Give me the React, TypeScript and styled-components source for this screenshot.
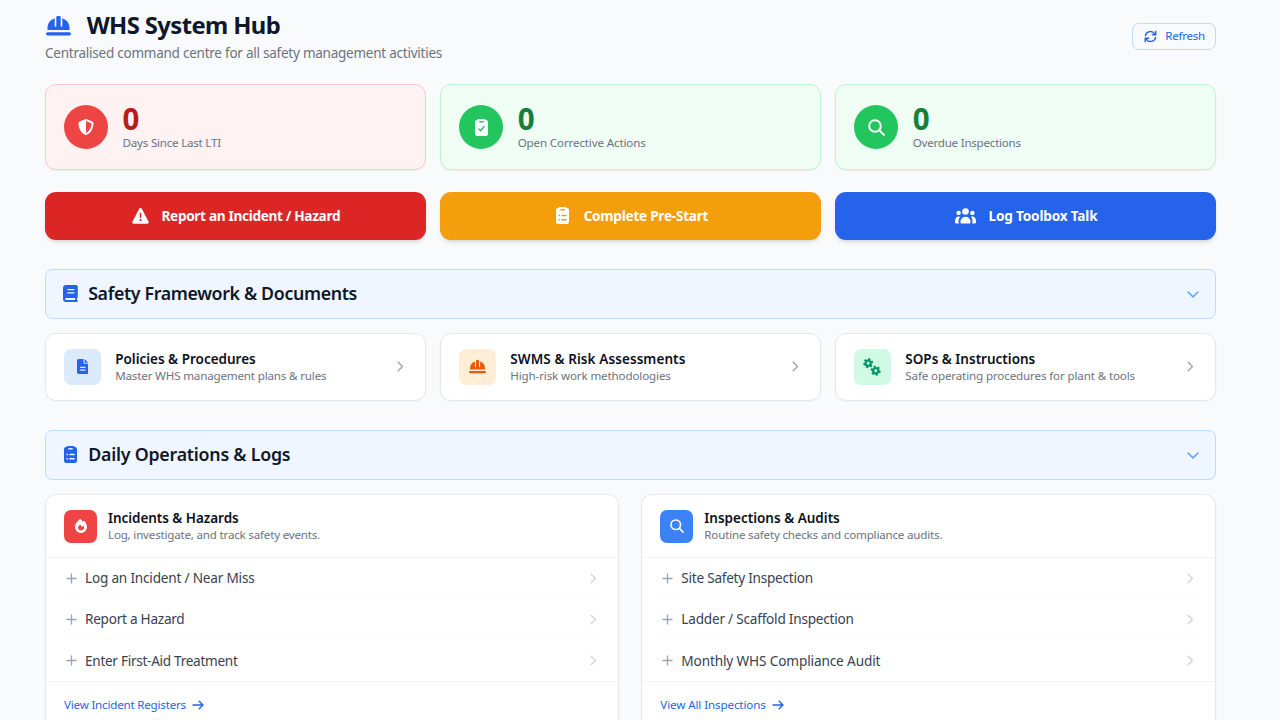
import React from 'react';
import styled, { createGlobalStyle } from 'styled-components';
import { FaShieldHalved } from 'react-icons/fa6';

const Global = createGlobalStyle`
  * { box-sizing: border-box; }
  body { margin: 0; background: #f9fafc; font-family: "Noto Sans", "Open Sans", sans-serif; color: #0f172a; height: 720px; overflow: hidden; }
  svg { display: block; flex: none; }
`;

const Page = styled.main`
  width: 1280px; height: 720px; overflow: hidden; padding: 10px 64.2px 0 45px;
  display: flex; flex-direction: column;
  > * { flex: none; }
`;
const Text = styled.span<{ $ls?: number }>`
  letter-spacing: ${p => p.$ls ?? 0}px; white-space: nowrap; display: block;
`;
const Header = styled.header`
  display: flex; justify-content: space-between; height: 74.2px;
`;
const TitleRow = styled.div`
  display: flex; align-items: center; gap: 15.5px; height: 32px; color: #2563eb; padding-left: 1.2px;
`;
const Title = styled.h1`
  margin: 0; font-size: 23.8px; font-weight: 700; line-height: 32px; letter-spacing: -0.6px; color: #0f172a; padding-bottom: 2px;
`;
const Subtitle = styled(Text)`font-size: 13.5px; line-height: 22px; color: #6b7280;`;
const RefreshButton = styled.button`
  margin: 13px 0 0; width: 84px; height: 27px; border: 1px solid #bfdbfe; border-radius: 7px;
  background: transparent; color: #2563eb; font: 400 11.6px/16px "Noto Sans", sans-serif;
  display: flex; align-items: center; gap: 8px; padding: 0 0 1px 11.5px;
`;
const ThreeCols = styled.div<{ $mb: number }>`
  display: grid; grid-template-columns: repeat(3, 1fr); gap: 14.4px; margin-bottom: ${p => p.$mb}px;
`;
const StatCard = styled.section<{ $bg: string; $border: string }>`
  height: 86px; border: 1px solid ${p => p.$border}; border-radius: 11px; background: ${p => p.$bg};
  display: flex; align-items: center; gap: 14.6px; padding: 0 18px; box-shadow: 0 1px 2px rgba(0,0,0,.06);
`;
const Round = styled.div<{ $bg: string }>`
  width: 44px; height: 44px; border-radius: 50%; background: ${p => p.$bg}; color: #fff;
  display: flex; align-items: center; justify-content: center;
`;
const StatValue = styled.div<{ $color: string }>`
  font-size: 29.5px; font-weight: 700; line-height: 31px; color: ${p => p.$color}; padding-bottom: 1px;
`;
const SmallText = styled(Text)`font-size: 11.6px; line-height: 16px; color: #6b7280;`;
const ActionButton = styled.button<{ $bg: string }>`
  height: 47.5px; border: 0; border-radius: 11px; background: ${p => p.$bg}; color: #fff;
  font: 700 13.6px/20px "Noto Sans", sans-serif; padding: 0 0 0 1px;
  display: flex; align-items: center; justify-content: center; gap: 13px;
  box-shadow: 0 3px 5px -1px rgba(0,0,0,.12), 0 2px 3px -2px rgba(0,0,0,.12);
`;
const ActionIcon = styled.div`min-width: 17px; display: flex; justify-content: center;`;
const Section = styled.div`
  height: 49.6px; border: 1px solid #bfdbfe; border-radius: 7px; background: #eff6ff; color: #2563eb;
  display: flex; align-items: center; padding: 0 16.2px; margin-bottom: 14.6px;
`;
const SectionTitle = styled.h2<{ $ls: number }>`
  margin: 0 auto 0 9px; font-size: 17.8px; font-weight: 600; line-height: 24px; letter-spacing: ${p => p.$ls}px; color: #0f172a; padding-bottom: 2px;
`;
const SectionIcon = styled.div`width: 17px; display: flex; justify-content: center;`;
const LinkCard = styled.a`
  height: 67.6px; background: #fff; border: 1px solid #e5e7eb; border-radius: 11px;
  display: flex; align-items: center; padding: 0 20.6px 0 18px; gap: 14.6px; box-shadow: 0 1px 2px rgba(0,0,0,.03);
`;
const Tile = styled.div<{ $bg: string; $color: string; $size: number }>`
  width: ${p => p.$size}px; height: ${p => p.$size}px; border-radius: 7px; background: ${p => p.$bg}; color: ${p => p.$color};
  display: flex; align-items: center; justify-content: center; flex: none;
`;
const Labels = styled.div`flex: 1; padding-top: 1px;`;
const CardTitle = styled(Text)`font-size: 13.5px; font-weight: 600; line-height: 17px; color: #0b1020;`;
const TwoCols = styled.div`display: grid; grid-template-columns: 1fr 1fr; gap: 21.9px;`;
const Panel = styled.section`
  height: 240px; background: #fff; border: 1px solid #e5e7eb; border-radius: 11px; box-shadow: 0 1px 2px rgba(0,0,0,.04);
`;
const PanelHead = styled.div`
  height: 63px; border-bottom: 1px solid #f1f3f5; display: flex; align-items: center; gap: 11px; padding: 0 18px;
`;
const PanelRows = styled.div`padding: 0 18px; border-bottom: 1px solid #f1f3f5;`;
const PanelRow = styled.div`
  height: 41px; display: flex; align-items: center; color: #9ca3af; padding: 0 3px 0 1.5px;
  &:not(:last-child) { border-bottom: 1px solid #f9fafb; }
`;
const RowText = styled(Text)`font-size: 13.6px; line-height: 20px; color: #374151; margin: 0 auto 0 8.5px;`;
const FooterLink = styled.a`
  display: flex; align-items: center; gap: 6px; height: 45px; padding: 0 18px; color: #2563eb; font-size: 11.6px; line-height: 16px;
`;

const stroke = { fill: 'none', stroke: 'currentColor', strokeLinecap: 'round', strokeLinejoin: 'round' } as const;
const Search = ({ size }: { size: number }) => (
  <svg width={size} height={size} viewBox="0 0 17 17" {...stroke} strokeWidth="2"><circle cx="7" cy="7" r="5.8" /><path d="M11.3 11.3 15.9 15.9" /></svg>
);
const ChevronRight = ({ color }: { color: string }) => (
  <svg width="7" height="11" viewBox="0 0 7 11" {...stroke} stroke={color} strokeWidth="1.4"><path d="M1.2 1.2l4.3 4.3L1.2 9.8" /></svg>
);
const ChevronDown = () => (
  <svg width="12" height="9" viewBox="0 -2 12 9" {...stroke} stroke="#60a5fa" strokeWidth="1.5"><path d="M1 1l5 4.9L11 1" /></svg>
);
const Plus = () => (
  <svg width="11" height="11" viewBox="0 0 11 11" {...stroke} strokeWidth="1.3"><path d="M5.5 1v9M1 5.5h9" /></svg>
);
const ArrowRight = () => (
  <svg width="12" height="10" viewBox="0 0 12 10" {...stroke} strokeWidth="1.4"><path d="M1 5h10M7.2 1.2 11 5 7.2 8.8" /></svg>
);
const RefreshIcon = () => (
  <svg width="13" height="13" viewBox="0 0 13 13" {...stroke} strokeWidth="1.4">
    <path d="M1.4 5.6A5.1 5.1 0 0 1 10.6 3.7L11.6 4.7M11.8 1.2v3.6H8.3M11.6 7.4A5.1 5.1 0 0 1 2.4 9.3L1.4 8.3M1.2 11.8V8.2h3.5" />
  </svg>
);
const Helmet = ({ size }: { size: number }) => (
  <svg width={size} height={size * 0.8} viewBox="0 0 25 20" fill="currentColor">
    <path d="M10.3 1.3Q10.3 0 11.6 0h1.8q1.3 0 1.3 1.3V10a.8.8 0 0 0 1.6 0V2.3A10.6 10.6 0 0 1 23.5 12v1.9h-22V12A10.6 10.6 0 0 1 8.7 2.3V10a.8.8 0 0 0 1.6 0Z" />
    <rect x="0" y="16.2" width="25" height="3.2" rx="1.6" />
  </svg>
);
const board = 'M3.6 0h5.8q.8 0 1.3.9h.2A2.1 2.1 0 0 1 13 3v11.8A2.2 2.2 0 0 1 10.8 17H2.2A2.2 2.2 0 0 1 0 14.8V3A2.1 2.1 0 0 1 2.1.9h.2Q2.8 0 3.6 0ZM4.9 1.9a.7.7 0 0 0 0 1.5h3.2a.7.7 0 0 0 0-1.5Z';
const ClipboardCheck = () => (
  <svg width="13" height="17" viewBox="0 0 13 17">
    <path fill="currentColor" fillRule="evenodd" d={board} />
    <path d="M3.9 9.9 5.7 11.7 9.1 7.5" fill="none" stroke="#22c55e" strokeWidth="1.4" strokeLinecap="round" strokeLinejoin="round" />
  </svg>
);
const ClipboardLines = ({ cut }: { cut: string }) => (
  <svg width="13" height="17" viewBox="0 0 13 17">
    <path fill="currentColor" fillRule="evenodd" d={board} />
    <path d="M5.9 8.5h4.2M5.9 12.7h4.2M3 8.5h.4M3 12.7h.4" fill="none" stroke={cut} strokeWidth="1.4" strokeLinecap="round" />
  </svg>
);
const Warning = () => (
  <svg width="17" height="16" viewBox="0 0 17 16">
    <path fill="currentColor" d="M7.2.8a1.5 1.5 0 0 1 2.6 0l6.7 12.6A1.5 1.5 0 0 1 15.1 15.7H1.9A1.5 1.5 0 0 1 .5 13.4Z" />
    <path d="M8.5 5.5v3.7" stroke="#dc2626" strokeWidth="1.6" strokeLinecap="round" /><circle cx="8.5" cy="12.1" r="1.05" fill="#dc2626" />
  </svg>
);
const People = () => (
  <svg width="21" height="16" viewBox="0 0 21 16" fill="currentColor">
    <circle cx="10.5" cy="3.5" r="3.3" /><circle cx="3.6" cy="4.9" r="2.2" /><circle cx="17.4" cy="4.9" r="2.2" />
    <path d="M5.4 13.9a5.1 5.1 0 0 1 10.2 0q0 1.5-1.3 1.5h-7.6q-1.3 0-1.3-1.500Z" />
    <path d="M0 13.6Q0 8.400 3.700 8.400q.9 0 1.500.3A7 7 0 0 0 3.900 15.400H1.200Q0 15.400 0 14.200ZM21 13.600q0-5.200-3.700-5.200-.9 0-1.500.3a7 7 0 0 1 1.300 6.700h2.700q1.200 0 1.200-1.200Z" />
  </svg>
);
const Book = () => (
  <svg width="15" height="17" viewBox="0 0 15 17">
    <path fill="currentColor" fillRule="evenodd" d="M3.2 0H13a1.8 1.8 0 0 1 1.8 1.8v9.6q0 1-.8 1.5v2.2a1 1 0 0 1 0 1.9H3A3 3 0 0 1 0 14V3.2A3.2 3.2 0 0 1 3.2 0ZM3.2 12.9a1 1 0 0 0 0 2.1h8.9v-2.1Z" />
    <path d="M4.9 4.6h6M4.9 7.9h6" stroke="#eff6ff" strokeWidth="1.4" strokeLinecap="round" />
  </svg>
);
const FileIcon = () => (
  <svg width="11.4" height="15" viewBox="0 0 11.4 15">
    <path fill="currentColor" d="M1.8 0h4.7v3.4q0 1.4 1.4 1.4h3.5v8.4A1.8 1.8 0 0 1 9.6 15H1.8A1.8 1.8 0 0 1 0 13.2V1.8A1.8 1.8 0 0 1 1.8 0ZM7.6.2 11.2 3.7H7.6Z" />
    <path d="M3.4 8.3H8M3.4 11.2H8" stroke="#dbeafe" strokeWidth="1.3" strokeLinecap="round" />
  </svg>
);
const teeth = [0, 60, 120, 180, 240, 300];
const Gear = ({ x, y, turn }: { x: number; y: number; turn: number }) => (
  <g transform={`translate(${x} ${y}) rotate(${turn})`}>
    <circle r="2.6" fill="none" stroke="currentColor" strokeWidth="2.2" />
    {teeth.map(a => <path key={a} transform={`rotate(${a})`} d="M-1.3-3.3-1.1-5H1.1L1.3-3.3Z" fill="currentColor" />)}
  </g>
);
const Gears = () => (
  <svg width="18" height="18" viewBox="0 0 18 18"><Gear x={5.2} y={5.2} turn={15} /><Gear x={12.7} y={12.7} turn={-15} /></svg>
);
const Flame = () => (
  <svg width="12" height="14" viewBox="0 0 12 14">
    <path fill="currentColor" d="M4.7.2Q5.2-.2 5.7.3 7 1.500 7.900 2.800L8.700 1.900q.5-.5.9.1Q12 5 12 8A6 6 0 0 1 0 8Q0 4 4.700.2Z" />
    <path fill="#ef4444" d="M4.8 5.7Q5.3 5.500 5.600 6L7 7.900 8 7q.5-.4.8.2 1.100 3.700-2.700 4.300Q3 11.300 3 8.600 3 7 4.800 5.700Z" />
  </svg>
);

const green = { bg: '#f0fdf4', border: '#bbf7d0', round: '#22c55e', color: '#15803d' };
const stats = [
  { bg: '#fef2f2', border: '#fecaca', round: '#ef4444', color: '#b91c1c', label: 'Days Since Last LTI', ls: -0.23, icon: <FaShieldHalved size={16} /> },
  { ...green, label: 'Open Corrective Actions', ls: -0.14, icon: <ClipboardCheck /> },
  { ...green, label: 'Overdue Inspections', ls: -0.24, icon: <Search size={17} /> },
];
const actions = [
  { bg: '#dc2626', label: 'Report an Incident / Hazard', ls: -0.32, icon: <Warning /> },
  { bg: '#f59e0b', label: 'Complete Pre-Start', ls: -0.25, icon: <ClipboardLines cut="#f59e0b" /> },
  { bg: '#2563eb', label: 'Log Toolbox Talk', ls: -0.18, icon: <People /> },
];
const docs = [
  { bg: '#dbeafe', color: '#2563eb', title: 'Policies & Procedures', tls: 0, text: 'Master WHS management plans & rules', ls: -0.17, icon: <FileIcon /> },
  { bg: '#ffedd5', color: '#ea580c', title: 'SWMS & Risk Assessments', tls: 0.09, text: 'High-risk work methodologies', ls: -0.14, icon: <Helmet size={17} /> },
  { bg: '#d1fae5', color: '#059669', title: 'SOPs & Instructions', tls: 0, text: 'Safe operating procedures for plant & tools', ls: -0.135, icon: <Gears /> },
];
const panels = [
  {
    bg: '#ef4444', title: 'Incidents & Hazards', tls: -0.05, text: 'Log, investigate, and track safety events.', ls: -0.2, icon: <Flame />,
    rows: [['Log an Incident / Near Miss', -0.2], ['Report a Hazard', -0.26], ['Enter First-Aid Treatment', -0.29]] as [string, number][],
    link: 'View Incident Registers', lls: -0.2,
  },
  {
    bg: '#3b82f6', title: 'Inspections & Audits', tls: 0, text: 'Routine safety checks and compliance audits.', ls: -0.19, icon: <Search size={14} />,
    rows: [['Site Safety Inspection', -0.25], ['Ladder / Scaffold Inspection', -0.22], ['Monthly WHS Compliance Audit', -0.125]] as [string, number][],
    link: 'View All Inspections', lls: -0.11,
  },
];

export default function App() {
  return (
    <Page>
      <Global />
      <Header>
        <div>
          <TitleRow><Helmet size={25} /><Title>WHS System Hub</Title></TitleRow>
          <Subtitle $ls={-0.24}>Centralised command centre for all safety management activities</Subtitle>
        </div>
        <RefreshButton><RefreshIcon /><Text $ls={-0.3}>Refresh</Text></RefreshButton>
      </Header>
      <ThreeCols $mb={22}>
        {stats.map(s => (
          <StatCard key={s.label} $bg={s.bg} $border={s.border}>
            <Round $bg={s.round}>{s.icon}</Round>
            <div><StatValue $color={s.color}>0</StatValue><SmallText $ls={s.ls}>{s.label}</SmallText></div>
          </StatCard>
        ))}
      </ThreeCols>
      <ThreeCols $mb={29.3}>
        {actions.map(a => <ActionButton key={a.label} $bg={a.bg}><ActionIcon>{a.icon}</ActionIcon><Text $ls={a.ls}>{a.label}</Text></ActionButton>)}
      </ThreeCols>
      <Section>
        <SectionIcon><Book /></SectionIcon>
        <SectionTitle $ls={-0.35}>Safety Framework &amp; Documents</SectionTitle><ChevronDown />
      </Section>
      <ThreeCols $mb={29.2}>
        {docs.map(d => (
          <LinkCard key={d.title}>
            <Tile $bg={d.bg} $color={d.color} $size={36.6}>{d.icon}</Tile>
            <Labels><CardTitle $ls={d.tls}>{d.title}</CardTitle><SmallText $ls={d.ls}>{d.text}</SmallText></Labels>
            <ChevronRight color="#9ca3af" />
          </LinkCard>
        ))}
      </ThreeCols>
      <Section>
        <SectionIcon><ClipboardLines cut="#eff6ff" /></SectionIcon>
        <SectionTitle $ls={-0.23}>Daily Operations &amp; Logs</SectionTitle><ChevronDown />
      </Section>
      <TwoCols>
        {panels.map(p => (
          <Panel key={p.title}>
            <PanelHead>
              <Tile $bg={p.bg} $color="#fff" $size={33}>{p.icon}</Tile>
              <Labels><CardTitle $ls={p.tls}>{p.title}</CardTitle><SmallText $ls={p.ls}>{p.text}</SmallText></Labels>
            </PanelHead>
            <PanelRows>
              {p.rows.map(([label, ls]) => <PanelRow key={label}><Plus /><RowText $ls={ls}>{label}</RowText><ChevronRight color="#d1d5db" /></PanelRow>)}
            </PanelRows>
            <FooterLink><Text $ls={p.lls}>{p.link}</Text><ArrowRight /></FooterLink>
          </Panel>
        ))}
      </TwoCols>
    </Page>
  );
}
